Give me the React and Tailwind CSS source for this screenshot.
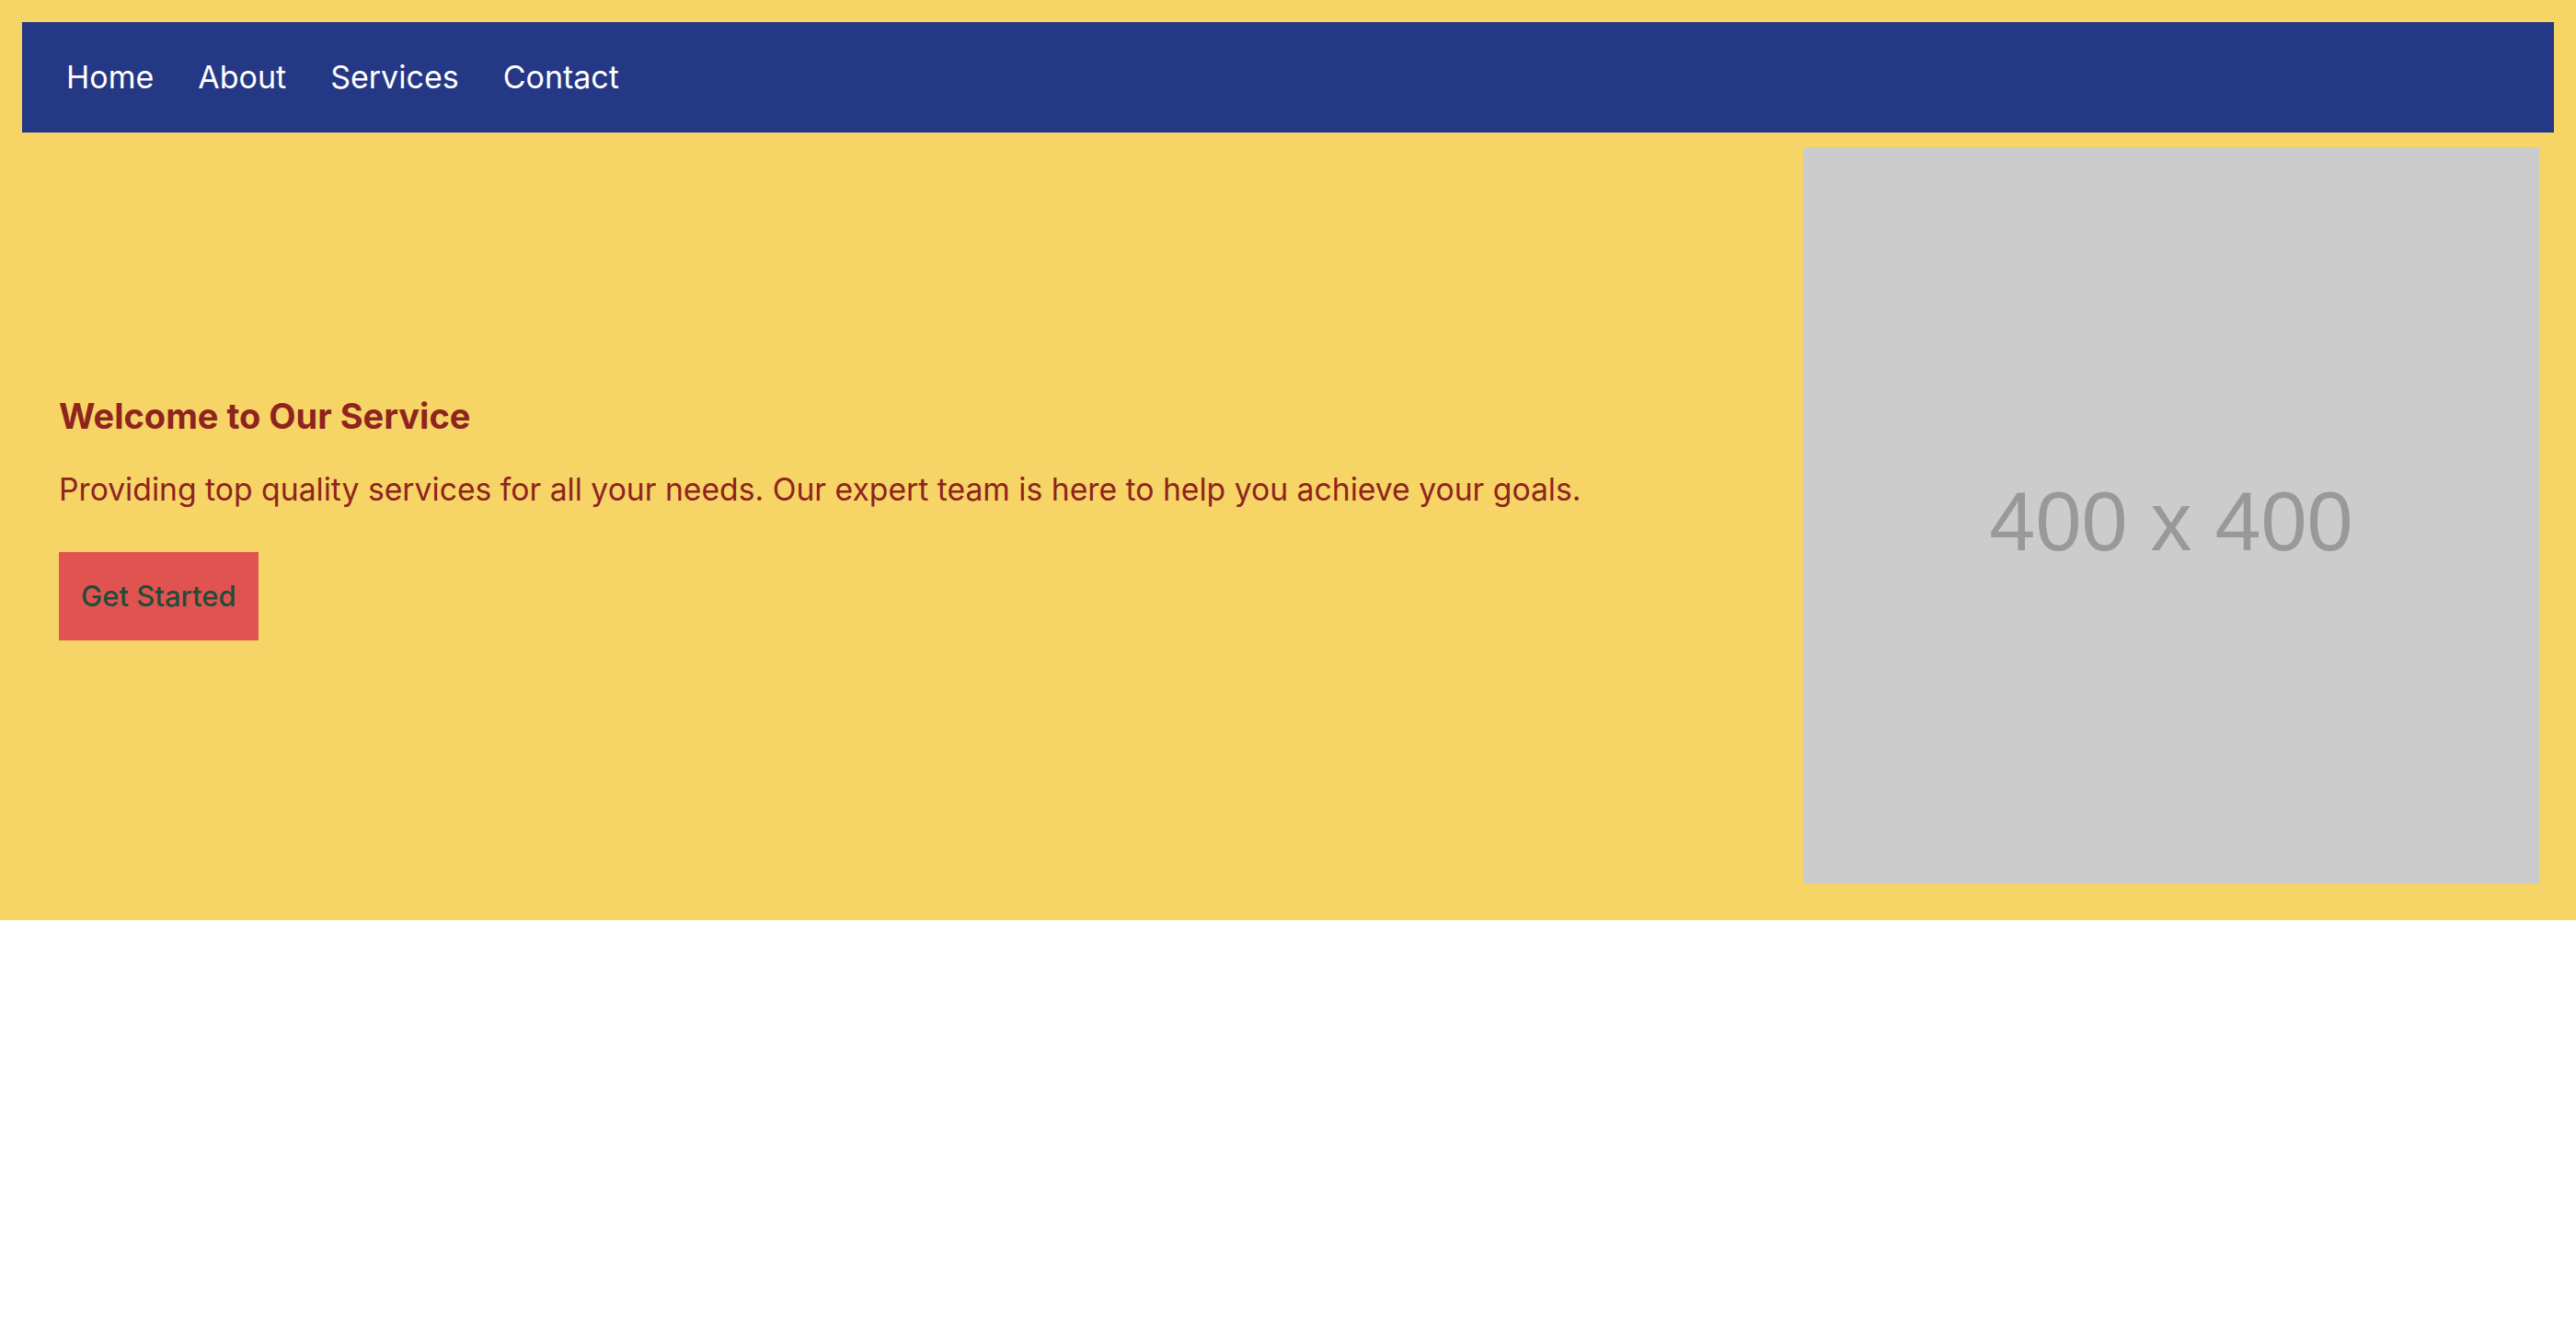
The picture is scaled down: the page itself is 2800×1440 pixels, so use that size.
import React from "react";

const links = ["Home", "About", "Services", "Contact"];

const App = () => {
  return (
    <div className="min-h-screen bg-white font-['Inter',sans-serif]">
      <div className="bg-[#f6d466] p-6">
        <nav className="flex h-[120px] items-center gap-12 bg-[#253885] px-12">
          {links.map((link) => (
            <a key={link} href="#" className="text-[34px] leading-[56px] text-white">
              {link}
            </a>
          ))}
        </nav>

        <section className="flex items-center p-4">
          <div className="flex-1 px-6">
            <h1 className="text-[38px] font-bold leading-[56px] text-[#8f231e]">Welcome to Our Service</h1>
            <p className="mt-[28px] text-[33.7px] leading-[48px] text-[#8f231e]">
              Providing top quality services for all your needs. Our expert team is here to help you achieve your goals.
            </p>
            <button className="mt-[44px] h-[96px] bg-[#e05350] px-6 text-[31px] font-medium text-[#1f4d3a]">
              Get Started
            </button>
          </div>
          <div className="flex h-[800px] w-[800px] shrink-0 items-center justify-center bg-[#cccccc]">
            <span className="pt-[14px] font-['Liberation_Sans',Arial,sans-serif] text-[90px] text-[#999999]">400 x 400</span>
          </div>
        </section>
      </div>
    </div>
  );
};

export default App;
